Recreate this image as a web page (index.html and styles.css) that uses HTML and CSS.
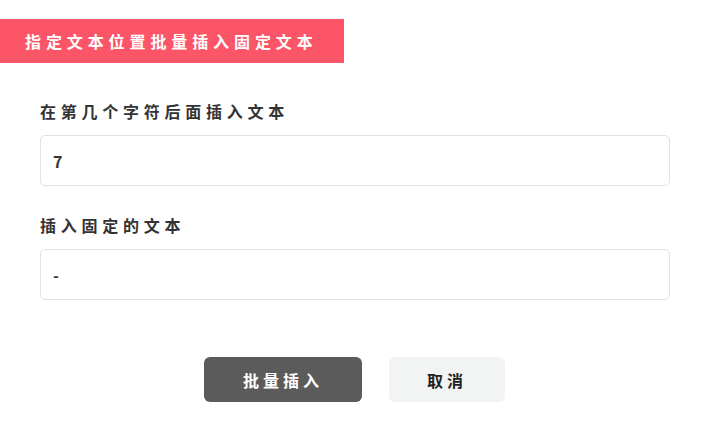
FILE: index.html
```html
<!DOCTYPE html>
<html>
<head>
    <meta charset="utf-8">
    <meta name="viewport" content="width=device-width, initial-scale=1.0">
    <title>指定文本位置批量插入固定文本</title>
    <link rel="stylesheet" href="styles.css">
</head>
<body>
    <div class="title-bar">指定文本位置批量插入固定文本</div>
    <div class="form">
        <label class="field-label" for="pos">在第几个字符后面插入文本</label>
        <input class="field-input" id="pos" type="text" value="7" autocomplete="off">
        <label class="field-label second" for="text">插入固定的文本</label>
        <input class="field-input" id="text" type="text" value="-" autocomplete="off">
    </div>
    <div class="actions">
        <button class="btn btn-primary">批量插入</button>
        <button class="btn btn-cancel">取消</button>
    </div>
</body>
</html>
```

FILE: styles.css
```css
body {
    margin: 0;
    background: #fff;
    font-family: "Noto Sans CJK SC", "Noto Sans", sans-serif;
    color: #333;
}
.title-bar {
    display: flex;
    align-items: center;
    width: 344px;
    height: 44px;
    margin-top: 19px;
    padding-left: 25px;
    box-sizing: border-box;
    background: #fd5568;
    color: #fff;
    font-size: 16px;
    font-weight: 700;
    letter-spacing: 4.9px;
}
.form {
    display: flex;
    flex-direction: column;
    padding: 36px 39px 0 40px;
}
.field-label {
    display: block;
    line-height: 24px;
    margin-bottom: 12px;
    font-size: 16px;
    font-weight: 700;
    letter-spacing: 4.75px;
    color: #333;
}
.field-label.second {
    margin-top: 27px;
}
.field-input {
    height: 51px;
    padding: 0 12px;
    box-sizing: border-box;
    border: 1px solid #e2e2e2;
    border-radius: 5px;
    outline: none;
    font-family: inherit;
    font-size: 16px;
    font-weight: 700;
    color: #333;
}
.actions {
    display: flex;
    justify-content: center;
    gap: 27px;
    margin-top: 57px;
}
.btn {
    height: 45px;
    border: none;
    border-radius: 6px;
    font-family: inherit;
    font-size: 16px;
    font-weight: 700;
    letter-spacing: 4px;
    cursor: pointer;
}
.btn-primary {
    width: 158px;
    background: #5b5b5b;
    color: #fff;
}
.btn-cancel {
    width: 116px;
    background: #f2f4f4;
    color: #222;
}
```
